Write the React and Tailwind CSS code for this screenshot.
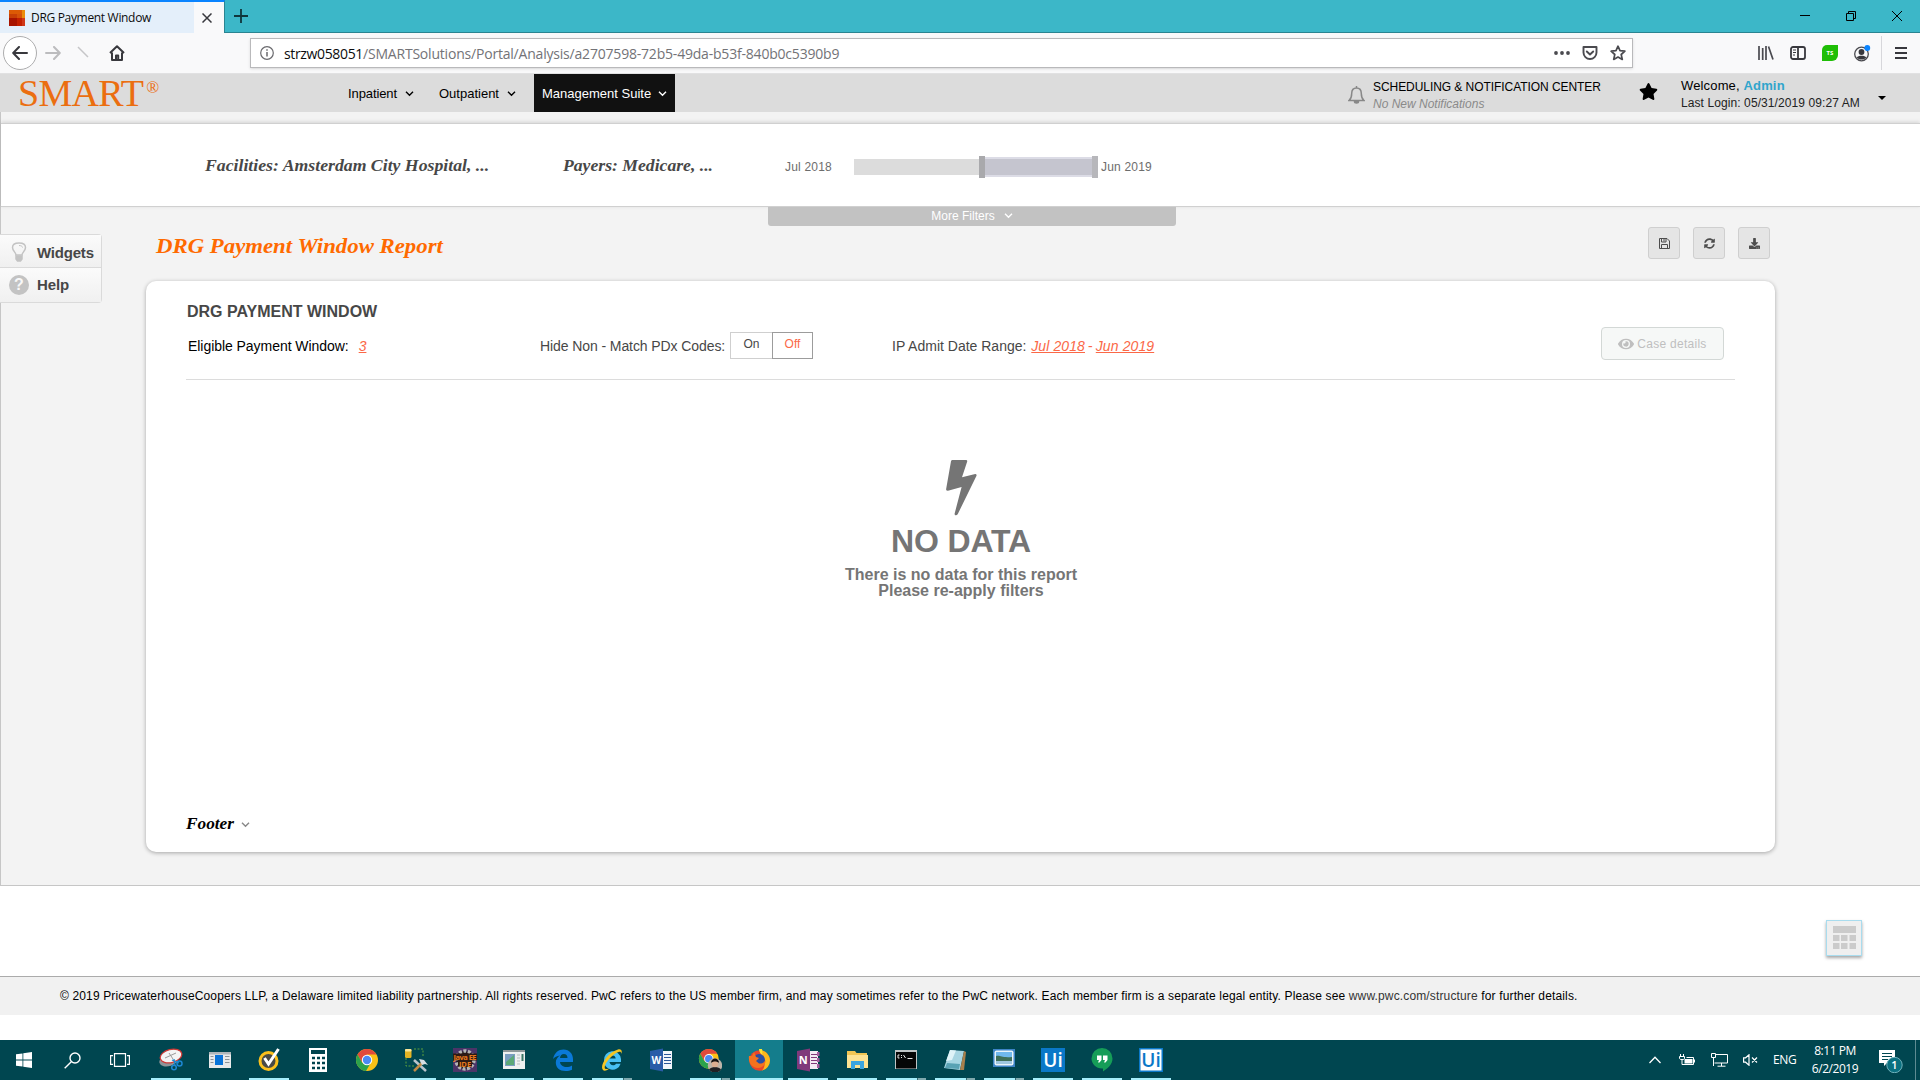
import React from "react";
import { FaSyncAlt, FaDownload, FaEye, FaStar } from "react-icons/fa";

const Chevron = ({ className = "", w = 9 }) => (
  <svg width={w} height={w} viewBox="0 0 9 9" fill="none" stroke="currentColor" strokeWidth="1.4" className={className}>
    <path d="M1 2.8 4.5 6.2 8 2.8" />
  </svg>
);

/* ---------- Browser chrome ---------- */

function TabBar() {
  return (
    <div className="flex h-[33px] bg-[#3cb7c8] border-b border-[#2a8491]">
      <div className="flex h-[33px] w-[225px] shrink-0 border-r border-r-[#2a8491] border-t-2 border-t-[#0a84ff] bg-[#f9f9fa]">
        <div className="flex w-[194px] items-center bg-[#e4effa] pl-[9px]">
          <svg width="16" height="16" viewBox="0 0 16 16" className="mt-px shrink-0" shapeRendering="crispEdges">
            <rect width="16" height="16" fill="#c73c0a" />
            <rect width="13" height="5" fill="#dc5a05" />
            <rect x="13" width="3" height="8" fill="#eb8c0a" />
            <rect y="4" width="8" height="4" fill="#c84005" />
            <rect x="8" y="4" width="5" height="4" fill="#d65208" />
            <rect y="8" width="8" height="8" fill="#a81400" />
            <rect x="8" y="8" width="5" height="8" fill="#c32000" />
            <rect x="13" y="8" width="3" height="8" fill="#d03818" />
          </svg>
          <span className="ml-1.5 whitespace-nowrap text-[12px] tracking-[-0.32px] text-[#0c0c0d]">DRG Payment Window</span>
        </div>
        <div className="flex w-[30px] items-center pl-[8px]">
          <svg width="10" height="10" viewBox="0 0 10 10" stroke="#38383d" strokeWidth="1.5"><path d="M.5.5l9 9M9.500.5l-9 9" /></svg>
        </div>
      </div>
      <div className="flex w-8 items-center justify-center">
        <svg width="14" height="14" viewBox="0 0 14 14" stroke="#10363b" strokeWidth="1.8"><path d="M7 0v14M0 7h14" /></svg>
      </div>
      <div className="ml-auto flex">
        <div className="flex w-[46px] items-center justify-center"><svg width="10" height="10" viewBox="0 0 10 10" stroke="#000"><path d="M0 4.5h10" /></svg></div>
        <div className="flex w-[46px] items-center justify-center"><svg width="10" height="10" viewBox="0 0 10 10" fill="none" stroke="#000"><path d="M.5 2.500h7v7h-7zM2.500 2.500v-2h7v7h-2" /></svg></div>
        <div className="flex w-[46px] items-center justify-center"><svg width="10" height="10" viewBox="0 0 10 10" stroke="#000"><path d="M0 0l10 10M10 0L0 10" /></svg></div>
      </div>
    </div>
  );
}

function NavBar() {
  return (
    <div className="flex h-[41px] items-center border-b border-[#e1e1e2] bg-[#f9f9fa] pl-[3px]">
      <div className="flex h-[34px] w-[34px] items-center justify-center rounded-full border border-[#adadae] bg-white">
        <svg width="16" height="14" viewBox="0 0 16 14" fill="none" stroke="#38383d" strokeWidth="2" strokeLinecap="round" strokeLinejoin="round"><path d="M15 7H1.500M7 1L1.200 7 7 13" /></svg>
      </div>
      <svg width="16" height="14" viewBox="0 0 16 14" fill="none" stroke="#bcbcbe" strokeWidth="2" strokeLinecap="round" strokeLinejoin="round" className="ml-2"><path d="M1 7h13.500M9 1l5.800 6L9 13" /></svg>
      <svg width="12" height="12" viewBox="0 0 12 12" stroke="#c6c6c8" strokeWidth="1.500" className="mb-[3px] ml-[16px]"><path d="M1 1l10 10" /></svg>
      <svg width="16" height="16" viewBox="0 0 16 16" fill="none" stroke="#38383d" strokeWidth="2" strokeLinejoin="round" className="ml-5"><path d="M1 8l7-6.800L15 8M3 7.500V15h10V7.500M7 15v-4.500h2.200V15" /></svg>
      <div className="ml-[125px] flex h-[30px] w-[1383px] items-center border border-[#b9b9bb] bg-white pl-[9px] pr-[6px] shadow-sm">
        <svg width="14" height="14" viewBox="0 0 14 14" fill="none" stroke="#6a6a6e" strokeWidth="1.200"><circle cx="7" cy="7" r="6.300" /><path d="M7 6v4.500M7 3.300v1.500" strokeWidth="1.500" /></svg>
        <div className="ml-[10px] mt-px whitespace-nowrap text-[14px] tracking-[-0.2px] text-[#737377]"><span className="tracking-[-0.35px] text-[#0c0c0d]">strzw058051</span>/SMARTSolutions/Portal/Analysis/a2707598-72b5-49da-b53f-840b0c5390b9</div>
        <svg width="16" height="4" viewBox="0 0 16 4" fill="#4a4a4f" className="ml-auto"><circle cx="2" cy="2" r="1.900" /><circle cx="8" cy="2" r="1.900" /><circle cx="14" cy="2" r="1.900" /></svg>
        <svg width="16" height="15" viewBox="0 0 16 15" fill="none" stroke="#4a4a4f" strokeWidth="1.900" strokeLinecap="round" strokeLinejoin="round" className="ml-3"><path d="M1.500 1h13v5.500a6.500 6.500 0 0 1-13 0zM4.800 5.500L8 8.500l3.200-3" /></svg>
        <svg width="16" height="16" viewBox="0 0 16 16" fill="none" stroke="#4a4a4f" strokeWidth="1.700" strokeLinejoin="round" className="ml-3"><path d="M8 1.200l2 4.500 4.900.5-3.700 3.300 1.100 4.900L8 12l-4.300 2.400 1.100-4.900L1.100 6.200 6 5.700z" /></svg>
      </div>
      <svg width="16" height="16" viewBox="0 0 16 16" fill="none" stroke="#4a4a4f" strokeWidth="1.700" className="ml-[125px]"><path d="M1 1v14M4.700 3v12M8 1v14M10.500 1.500l4.500 13" /></svg>
      <svg width="16" height="14" viewBox="0 0 16 14" fill="none" stroke="#38383d" strokeWidth="1.800" className="ml-4"><rect x="1" y="1" width="14" height="12" rx="2" /><path d="M8 1v12" /><path d="M3 4h3M3 6.500h3M3 9h2" strokeWidth="1" /></svg>
      <div className="ml-4 flex h-4 w-4 items-center justify-center rounded-tl-[5px] rounded-br-[6px] bg-[#1fbe06] text-[6px] font-bold text-white">TS</div>
      <svg width="17" height="17" viewBox="0 0 17 17" className="ml-4"><circle cx="7.500" cy="9" r="6.800" fill="none" stroke="#4a4a4f" strokeWidth="1.300" /><circle cx="7.500" cy="7" r="2.900" fill="#38383d" /><path d="M2.800 12.500c1-2.500 8.400-2.500 9.400 0-2.400 2.800-7 2.800-9.400 0z" fill="#38383d" /><circle cx="13.300" cy="3" r="2.900" fill="#0a84ff" /></svg>
      <div className="ml-[10px] h-[34px] w-px bg-[#d7d7db]" />
      <svg width="12" height="12" viewBox="0 0 12 12" stroke="#38383d" strokeWidth="2" className="ml-[13px]"><path d="M0 1h12M0 6h12M0 11h12" /></svg>
    </div>
  );
}

/* ---------- Application header ---------- */

function AppHeader() {
  return (
    <header className="flex h-[38px] bg-[#dcdcdc] text-[13px] text-black">
      <div className="flex w-[338px] items-start pl-[18px] font-['Liberation_Serif',serif] text-[#eb6e10]">
        <span className="text-[38px] leading-[39px] tracking-[-0.700px]">SMART</span>
        <span className="ml-[3px] mt-[5px] text-[17px] leading-[17px]">®</span>
      </div>
      <nav className="flex">
        <a className="flex w-[91px] items-center pl-[10px] pt-px tracking-[-0.1px]">Inpatient<Chevron className="ml-2" /></a>
        <a className="flex w-[105px] items-center pl-[10px] pt-px">Outpatient<Chevron className="ml-2" /></a>
        <a className="flex w-[141px] items-center bg-[#111] pl-2 pt-px text-white"><span className="whitespace-nowrap">Management Suite</span><Chevron className="ml-[7px] shrink-0" /></a>
      </nav>
      <div className="ml-[673px] flex">
        <svg width="17" height="19" viewBox="0 0 17 19" fill="none" stroke="#888" strokeWidth="1.500" className="mt-[11px]"><path d="M1 15.500c2.500-2 2.700-4 2.700-7C3.700 5 5.500 3 8.500 3s4.800 2 4.800 5.500c0 3 .2 5 2.700 7zM8.500 1v2" /><path d="M6.500 16.500a2 1.500 0 0 0 4 0z" fill="#888" /></svg>
        <div className="ml-[8px] w-[266px] pt-[6px] text-[12px]">
          <div className="h-[17px] whitespace-nowrap leading-[14px] tracking-[-0.06px]">SCHEDULING &amp; NOTIFICATION CENTER</div>
          <div className="italic leading-[14px] text-[#8a8a8a]">No New Notifications</div>
        </div>
        <FaStar size={19} className="mt-[8px]" />
        <div className="ml-[23px] w-[187px] whitespace-nowrap pt-[4px]">
          <div className="h-[18px] leading-[15px] tracking-[0.15px]">Welcome, <b className="text-[#30a5cc]">Admin</b></div>
          <div className="text-[12px] leading-[15px] tracking-[0.09px] text-[#222]">Last Login: 05/31/2019 09:27 AM</div>
        </div>
        <div className="ml-[10px] mt-[22px] h-0 w-0 border-x-4 border-t-4 border-x-transparent border-t-black" />
      </div>
    </header>
  );
}

function FilterBar() {
  return (
    <div className="flex h-[84px] items-center border-y border-[#d0d0d0] bg-white pl-[204px] pt-[3px] text-[#474747] shadow-[0_-1px_4px_rgba(0,0,0,0.13)]">
      <div className="w-[358px] whitespace-nowrap font-['Liberation_Serif',serif] text-[16.500px] font-bold italic"><span className="inline-block origin-left scale-x-[1.075]">Facilities: Amsterdam City Hospital, ...</span></div>
      <div className="w-[222px] whitespace-nowrap font-['Liberation_Serif',serif] text-[16.500px] font-bold italic"><span className="inline-block origin-left scale-x-[1.070]">Payers: Medicare, ...</span></div>
      <div className="w-[69px] text-[12px] tracking-[0.2px] text-[#6d6d6d]">Jul 2018</div>
      <div className="flex h-[22px] w-[244px] items-center">
        <div className="h-4 w-[125px] bg-[#dcdcdc]" />
        <div className="flex h-[22px] w-[119px] items-center">
          <div className="h-[22px] w-[6px] bg-[#a9a9ac]" />
          <div className="h-5 w-[107px] border-y-2 border-[#dcdce6] bg-[#c5c5cf]" />
          <div className="h-[22px] w-[6px] bg-[#b7b7bb]" />
        </div>
      </div>
      <div className="ml-[3px] text-[12px] tracking-[0.2px] text-[#6d6d6d]">Jun 2019</div>
    </div>
  );
}

/* ---------- Report page ---------- */

const toolBtn = "flex h-8 w-8 items-center justify-center rounded-[3px] border border-[#cfcfcf] bg-[#e5e5e5] text-[#4d4d4d]";

function SideTabs() {
  return (
    <div className="-ml-px mt-[27px] h-[69px] w-[102px] shrink-0 rounded-r-[4px] border border-l-0 border-[#dadada] text-[15px] font-bold text-[#474747]">
      <div className="flex h-[33px] items-center border-b border-[#dadada] bg-linear-to-b from-[#fbfbfb] to-[#f0f0f0] pl-[11px]">
        <svg width="16" height="20" viewBox="0 0 16 20" fill="none" stroke="#c3c3c3" strokeWidth="1.500" className="mt-0.5"><path d="M5 13c0-2.500-3.500-4-3.500-7.500C1.500 2.500 4.500 1 8 1s6.500 1.500 6.500 4.500C14.500 9 11 10.500 11 13z" /><path d="M8 3.500c2 0 3.500.8 3.500 2" strokeWidth="1" /><path d="M5 14h6v3l-1.500 2h-3L5 17z" fill="#c3c3c3" /></svg>
        <span className="ml-[10px] mt-[4px] tracking-[-0.200px]">Widgets</span>
      </div>
      <div className="flex h-[34px] items-center bg-linear-to-b from-[#fbfbfb] to-[#f0f0f0] pl-[9px]">
        <span className="flex h-5 w-5 items-center justify-center rounded-full bg-[#c3c3c3] text-[16px] text-[#f8f8f8]">?</span>
        <span className="ml-[8px] mt-px tracking-[-0.1px]">Help</span>
      </div>
    </div>
  );
}

function ReportCard() {
  return (
    <section className="flex h-[571px] w-[1629px] flex-col rounded-[10px] bg-white px-[40px] pt-[21px] text-[#474747] shadow-[0_1px_4px_rgba(0,0,0,0.32)]">
      <h2 className="pl-px text-[16px] font-bold leading-[20px]">DRG PAYMENT WINDOW</h2>
      <div className="mt-[4px] flex h-[40px] items-center whitespace-nowrap text-[14px]">
        <div className="w-[354px] pl-[2px] tracking-[-0.05px] text-black">Eligible Payment Window:<span className="ml-[10px] italic text-[#fb6847] underline">3</span></div>
        <div className="w-[190px] tracking-[-0.09px]">Hide Non - Match PDx Codes:</div>
        <div className="-mt-[2px] flex h-[27px] w-[162px] text-[12px]">
          <div className="flex w-[42px] items-center justify-center border border-r-0 border-[#cfcfcf] pb-0.5">On</div>
          <div className="flex w-[41px] items-center justify-center border border-[#9c9c9c] pb-0.5 text-[#fb6847]">Off</div>
        </div>
        <div>IP Admit Date Range: <span className="ml-px tracking-[0.1px] text-[#fb6847]"><i className="underline">Jul 2018</i><span className="mx-[3px]">-</span><i className="underline">Jun 2019</i></span></div>
        <div className="-mt-[5px] ml-auto mr-[11px] flex h-[33px] w-[123px] items-center justify-center rounded-[4px] border border-[#d3d8d6] bg-[#f6f8f7] text-[12px] tracking-[0.27px] text-[#bfbfbf]"><FaEye size={16} className="mr-[3px]" />Case details</div>
      </div>
      <div className="mt-[13px] h-px bg-[#dcdcdc]" />
      <div className="mt-[79px] flex flex-col items-center pl-px font-bold text-[#757575]">
        <svg width="31" height="57" viewBox="0 0 31 57" fill="currentColor"><path d="M6.500 1h13.500q1.500 0 1.200 1.500L16 18.200l13.200-3.200q1.700 0 1.300 1.800L11.800 55q-.8 1.600-2.500 1.300-1-.4-.6-2L15.600 28 2 31.800q-2 0-1.900-1.500L5 2.200Q5.300 1 6.500 1z" /></svg>
        <div className="mt-[7px] text-[32px] leading-[36px] tracking-[-0.15px]">NO DATA</div>
        <div className="mt-[8px] text-center text-[16px] leading-[16px]">There is no data for this report<br />Please re-apply filters</div>
      </div>
      <div className="mb-[18px] mt-auto flex items-center font-['Liberation_Serif',serif] text-[16px] font-bold italic leading-5 text-black"><span className="inline-block w-[48px] origin-left scale-x-[1.08]">Footer</span><Chevron className="ml-[7px] text-[#888]" /></div>
    </section>
  );
}

function ReportArea() {
  return (
    <main className="flex h-[774px] flex-col border-b border-l border-[#c6c6c6] bg-[#f3f3f3]">
      <div className="h-[11px] shrink-0" />
      <FilterBar />
      <div className="flex">
        <SideTabs />
        <div className="ml-[44px] w-[1629px]">
          <div className="flex h-[74px]">
            <h1 className="w-[622px] whitespace-nowrap pl-[10px] pt-[25px] font-['Liberation_Serif',serif] text-[20.500px] font-bold italic leading-[28px] text-[#ff6a00]"><span className="inline-block origin-left scale-x-[1.112]">DRG Payment Window Report</span></h1>
            <div className="flex h-[19px] w-[408px] items-center justify-center rounded-b-[3px] bg-[#c2c2c2] pb-[2px] text-[12px] text-white">More Filters<Chevron className="ml-[9px]" /></div>
            <div className="ml-auto mr-[5px] mt-5 flex gap-[13px]">
              <div className={toolBtn}>
                <svg width="11" height="11" viewBox="0 0 11 11" fill="none" stroke="currentColor"><path d="M.5.5h7.500l2.500 2.500v7.500H.5zM2.500 10.500v-4h6v4" /><path d="M2.500.5h4.500v3.500H2.500zM5 1v2.500" /></svg>
              </div>
              <div className={toolBtn}><FaSyncAlt size={11} /></div>
              <div className={toolBtn}><FaDownload size={11} /></div>
            </div>
          </div>
          <ReportCard />
        </div>
      </div>
    </main>
  );
}

function PageFooter() {
  return (
    <>
      <div className="flex h-[90px] justify-end bg-white pr-[58px] pt-[34px]">
        <div className="flex h-9 w-9 items-center justify-center border border-[#a9dcee] bg-[#efefef] shadow-[0_2px_3px_rgba(0,0,0,0.35)]">
          <svg width="23" height="24" viewBox="0 0 23 24" fill="#cbcbcb"><path d="M0 0h23v7H0zM0 9h6.500v6H0zM8 9h6.500v6H8zM16.500 9H23v6h-6.500zM0 17h6.500v6H0zM8 17h6.500v6H8zM16.500 17H23v6h-6.500z" /></svg>
        </div>
      </div>
      <footer className="flex h-[39px] items-center whitespace-nowrap border-t border-[#ababab] bg-[#f1f1f1] pl-[60px] text-[12px] tracking-[0.143px] text-black">
        <span>© 2019 PricewaterhouseCoopers LLP, a Delaware limited liability partnership. All rights reserved. PwC refers to the US member firm, and may sometimes refer to the PwC network. Each member firm is a separate legal entity. Please see <span className="text-[#333]">www.pwc.com/structure</span> for further details.</span>
      </footer>
      <div className="h-[25px] bg-white" />
    </>
  );
}

/* ---------- Taskbar ---------- */

const ChromeMark = () => (
  <g>
    <circle cx="12" cy="12" r="11" fill="#fbc116" />
    <path d="M2.500 6.500A11 11 0 0 1 21.500 6.500H12L7.200 14.800z" fill="#e04a3c" />
    <path d="M2.500 6.500A11 11 0 0 0 11 23l5-8.500-8.800.3z" fill="#2ba24c" />
    <circle cx="12" cy="12" r="5.200" fill="#fff" />
    <circle cx="12" cy="12" r="4.200" fill="#4a8af4" />
  </g>
);

const icons = {
  snip: <g><ellipse cx="10" cy="12" rx="10" ry="6" fill="#8d9498" transform="rotate(-18 10 12)" /><ellipse cx="12" cy="8" rx="11" ry="6.500" fill="#f4f4f4" stroke="#cf3a36" strokeWidth="1.200" transform="rotate(-14 12 8)" /><path d="M6 10l11-5M10 5l4 6" stroke="#999" /><path d="M13 12l7 3M15 11l1 7" stroke="#1c86d1" strokeWidth="1.300" /><circle cx="15" cy="19.500" r="2.300" fill="none" stroke="#1c86d1" strokeWidth="1.500" /><circle cx="20.500" cy="15.500" r="2.500" fill="none" stroke="#1c86d1" strokeWidth="1.500" /></g>,
  panel: <g><path d="M1 4h22v16H1z" fill="#e9eaea" /><path d="M1 4h22v2.500H1z" fill="#aeb6ba" /><path d="M7 7h8v10H7z" fill="#0a74d8" /><path d="M2.500 8.500h3M2.500 11.500h3M2.500 14.500h3M17 8.500h4.500M17 11.500h4.500M17 14.500h4.500" stroke="#8b9397" /></g>,
  norton: <g><circle cx="11.500" cy="13" r="8.500" fill="#4a4a45" stroke="#fbc01c" strokeWidth="3" /><path d="M7.500 10l4 6L21.500 1" fill="none" stroke="#fff" strokeWidth="3" /></g>,
  calc: <g><path d="M3 0h18v24H3z" fill="#fff" /><path d="M5 2h14v4H5z" fill="#00434e" /><path d="M6 10h3M11 10h3M16 10h3M6 15h3M11 15h3M16 15h3M6 20h3M11 20h3M16 20h3" stroke="#00434e" strokeWidth="2.500" /></g>,
  chrome: <ChromeMark />,
  database: <g><path d="M10 1h9v8M10 18H2v-8" fill="none" stroke="#5aa03c" strokeDasharray="2 1.500" /><rect x="1" y="1" width="6.500" height="9" rx="1.500" fill="#e4b424" /><rect x="1" y="1" width="6.500" height="2.500" rx="1" fill="#fbe79a" /><path d="M10 12l12 11" stroke="#b9c4cc" strokeWidth="2.500" /><path d="M10 23l9-9" stroke="#c08a44" strokeWidth="2.500" /><path d="M15 11l5 1 4 5-3-1-3 1z" fill="#d5dde2" /></g>,
  java: <g><path d="M0 0h24v24H0z" fill="#4a3468" /><circle cx="12" cy="12" r="9" fill="#1f1718" stroke="#b4b4b4" strokeWidth="3.500" strokeDasharray="3 1.500" /><path d="M0 5.500h24v7H5v6h14v-6H0z" fill="#2d1a14" /><text x="12" y="11.500" textAnchor="middle" fontSize="7.500" fontWeight="bold" fill="#e87a1c" textLength="23">Java EE</text><text x="12" y="18.500" textAnchor="middle" fontSize="7.500" fontWeight="bold" fill="#e87a1c">IDE</text></g>,
  sheet: <g><path d="M1 2h22v19H1z" fill="#eef0f0" /><path d="M1 2h22v2H1z" fill="#8e9799" /><path d="M3 6h10v12H3z" fill="#7a9dc0" /><path d="M4 14l8-7v10H4z" fill="#5ca877" /><path d="M15 7h3M15 10h3M15 13h3M15 16h3" stroke="#b5bcbe" /><path d="M20.500 6v7" stroke="#3d7766" strokeWidth="2" /></g>,
  edge: <path d="M2 11C3.500 4.500 7.500 1.500 12.500 1.500c6 0 9.500 4.500 9.500 9.500v3H9c.3 3.500 3.500 5 6.500 5 2 0 3.900-.5 5.500-1.500v4.200c-1.700.9-4 1.300-6.500 1.300-6 0-9.700-3.500-9.700-8.500 0-3 1.700-5.500 4.200-7C5.800 8 3.500 9 2 11zm7-1h7.500c0-2.500-1.400-4-3.600-4S9.300 7.500 9 10z" fill="#0a79d8" />,
  ie: <g><path d="M4 12.500a8.500 8.500 0 0 1 17-1.500v3H9.500c.3 2 1.500 3.200 3.500 3.200 1.300 0 2.300-.5 3-1.500h4.600A8.500 8.500 0 0 1 4 12.500zm5.500-2h6.200c-.2-1.800-1.400-3-3-3s-2.900 1.200-3.200 3z" fill="#48c1f3" /><path d="M3 22C-1 18 8 4 18 1.500c3.500-.8 4.500 1.500 3.200 4.500.2-2-.9-2.800-2.700-2C11.500 6.500 3 17 5 20.500c1 1.200 3.400.4 5-.8-2.500 2.500-5.500 3.800-7 2.300z" fill="#f4c522" /></g>,
  word: <g><path d="M12 3h11v18H12z" fill="#f2f5fa" /><path d="M15 6.500h7M15 9.500h7M15 12.500h7M15 15.500h7" stroke="#2a5698" /><path d="M1 3l13-2.500v23L1 21z" fill="#2a5ca8" /><text x="7.300" y="15.500" textAnchor="middle" fontSize="10" fontWeight="bold" fill="#fff">W</text></g>,
  profile: <g><g transform="scale(.9)"><ChromeMark /></g><circle cx="17" cy="17.500" r="7.200" fill="#bdb4a9" /><path d="M11 21.500c2-3.500 10-3.500 12 0a7.200 7.200 0 0 1-12 0z" fill="#202024" /><circle cx="17" cy="16" r="3.300" fill="#dcae91" /><path d="M13 15c0-6 8-6 8 0-2-2-6-2-8 0z" fill="#181414" /></g>,
  firefox: <g><circle cx="12.500" cy="12.500" r="10.300" fill="#e8452c" /><path d="M14 2c5 1 9 5.500 9 10.500a10.300 10.300 0 0 1-8 10C20 18 17 9 14 2z" fill="#fcb81d" /><path d="M12 1c0 4 3 5 4 8l-1-8z" fill="#fde331" /><circle cx="12" cy="12" r="6" fill="#2a4fa3" /><path d="M2 8C1 15 5 20 11 20c5 0 8-4 7.500-8-1.500 3-4 4-6.500 3.500L9 13l3-3-3-1-2-5-2 4z" fill="#f4721e" /></g>,
  onenote: <g><path d="M12 3h10v18H12z" fill="#f3e9f4" /><path d="M15 6.500h6M15 9.500h6M15 12.500h6M15 15.500h6" stroke="#80397b" /><path d="M21 4h2.500v4H21zM21 10h2.500v4H21zM21 16h2.500v4H21z" fill="#a35b9f" /><path d="M1 3l13-2.500v23L1 21z" fill="#80397b" /><text x="7.300" y="16" textAnchor="middle" fontSize="11" fontWeight="bold" fill="#fff">N</text></g>,
  folder: <g><path d="M2 3h8l1.500 2H22v15H2z" fill="#f1c654" /><path d="M2 7h21v13H2z" fill="#fde393" /><path d="M6 21v-8h13v8h-4v-4h-5v4z" fill="#3aa5e0" /></g>,
  cmd: <g><path d="M1 2h22v19H1z" fill="#bfc4c5" /><path d="M2 4h20v16.500H2z" fill="#060606" /><path d="M5.500 7H4v3h1.500M7.500 7v1M7.500 10V9M9.500 7l2 3M13.500 10.500h5" stroke="#e8e8e8" fill="none" /></g>,
  notepad: <g><path d="M7 2l14 1-4 19-16-2z" fill="#a7d5e2" /><path d="M7 2l6 .5L9 12l-6 1z" fill="#dff3f8" /><path d="M21 3l2 1-2 18-4 0z" fill="#a8804c" /><path d="M4 15l13 1-1 5-14-1z" fill="#59a2b4" /></g>,
  photo: <g><path d="M1 1h22v18H1z" fill="#3d84c6" /><rect x="2.500" y="2.500" width="19" height="15" rx="2" fill="#eaf4fa" /><path d="M4 4h16v6H4z" fill="#70b8ec" /><path d="M4 8c5-1 5 2 16 1v4H4z" fill="#3f6f58" /><path d="M4 13h16v3H4z" fill="#9fc7df" /></g>,
  ui: <g><path d="M0 0h24v24H0z" fill="#0a78c8" /><text x="12" y="19" textAnchor="middle" fontSize="19" fontWeight="600" fill="#fff">Ui</text></g>,
  hangouts: <g><path d="M12 0a10.500 10.500 0 0 1 10.500 10.500c0 6-5 10-9.500 13v-3C6.500 21 1.500 16 1.500 10.500A10.500 10.500 0 0 1 12 0z" fill="#169d58" /><path d="M7 7.500h4.500V12l-2 2.500H8L9 12H7zM13 7.500h4.500V12l-2 2.500H14l1-2.500h-2z" fill="#fff" /></g>,
  uiAlt: <g><path d="M0 0h24v24H0z" fill="#0a78c8" /><path d="M1.500 1.500h21v21h-21z" fill="#fff" /><text x="12" y="19" textAnchor="middle" fontSize="19" fontWeight="600" fill="#0a78c8">Ui</text></g>,
};

const tasks = [
  ["snip", 1], ["panel", 0], ["norton", 1], ["calc", 0], ["chrome", 0], ["database", 1], ["java", 1], ["sheet", 1],
  ["edge", 1], ["ie", 2], ["word", 0], ["profile", 2], ["firefox", 3], ["onenote", 1], ["folder", 1], ["cmd", 2],
  ["notepad", 2], ["photo", 2], ["ui", 1], ["hangouts", 1], ["uiAlt", 1],
];

function TaskItem({ name, state }) {
  const active = state === 3;
  return (
    <div className="flex h-10 w-[49px] flex-col items-center">
      <div className={active ? "flex h-[38px] w-12 items-center justify-center bg-[#147d8c]" : "flex h-[38px] w-12 items-center justify-center"}>
        <svg width="24" height="24" viewBox="0 0 24 24" className="mt-[2px]">{icons[name]}</svg>
      </div>
      {state > 0 && (
        <div className={active ? "flex h-[2px] w-12 bg-[#a5eefb]" : "flex h-[2px] w-10 bg-[#a5eefb]"}>
          {state === 2 && <div className="ml-auto h-[2px] w-[9px] border-l border-[#33686f] bg-[#7fa9ae]" />}
        </div>
      )}
    </div>
  );
}

function Taskbar() {
  return (
    <div className="flex h-10 bg-[#004650] text-white">
      <div className="flex w-12 items-center justify-center"><svg width="16" height="16" viewBox="0 0 16 16" fill="#fff"><path d="M0 2.300L6.500 1.400V7.600H0zM7.300 1.200L16 0v7.600H7.300zM0 8.400h6.500v6.200L0 13.700zM7.300 8.400H16V16l-8.700-1.200z" /></svg></div>
      <div className="flex w-12 items-center justify-center"><svg width="17" height="17" viewBox="0 0 17 17" fill="none" stroke="#fff" strokeWidth="1.400"><circle cx="11" cy="6" r="5" /><path d="M7.300 9.700L.7 16.300" /></svg></div>
      <div className="mr-[2px] flex w-12 items-center justify-center"><svg width="20" height="14" viewBox="0 0 20 14" fill="none" stroke="#fff" strokeWidth="1.200"><path d="M4.500.6h11v12.800h-11zM3 2.600H.6v8.800H3M17 2.600h2.400v8.800H17" /></svg></div>
      {tasks.map(([name, state]) => <TaskItem key={name} name={name} state={state} />)}
      <div className="ml-auto flex items-center text-[12px]">
        <svg width="12" height="8" viewBox="0 0 12 8" fill="none" stroke="#fff" strokeWidth="1.300"><path d="M.5 7L6 1.300 11.500 7" /></svg>
        <svg width="16" height="12" viewBox="0 0 16 12" fill="none" stroke="#fff" className="ml-[18px]"><path d="M1.500 0v2.500M4.500 0v2.500M.5 2.500h5v2c0 1.500-5 1.500-5 0zM3 5.500v5h11.500v-7H7.500M15.500 5.500v3" /><path d="M5.500 5h8v4.500h-8z" fill="#fff" stroke="none" /></svg>
        <svg width="17" height="14" viewBox="0 0 17 14" fill="none" stroke="#fff" className="ml-4"><path d="M5 1.500h11.500v8.500H3.500M.5.500h4v4h-4zM2.500 4.500v8.500M10.500 10v3M6.500 13.200h8" /></svg>
        <svg width="15" height="12" viewBox="0 0 15 12" fill="none" stroke="#fff" strokeWidth="1.200" className="ml-[15px]"><path d="M.6 3.800h2L6 .8v10.400l-3.400-3H.6zM9 3.500l5 5M14 3.500l-5 5" /></svg>
        <span className="ml-[15px] w-[38px] tracking-[-0.4px]">ENG</span>
        <div className="w-[48px] text-center leading-[18px] tracking-[-0.45px]"><div>8:11 PM</div><div>6/2/2019</div></div>
        <svg width="26" height="26" viewBox="0 0 26 26" className="ml-[19px]"><path d="M1 3h16v13H9l-3 3v-3H1z" fill="#fff" /><path d="M4 6.500h10M4 9.500h10M4 12.500h6" stroke="#004650" /><circle cx="16.500" cy="18" r="7.700" fill="#0a7080" stroke="#6fb0ba" /><text x="16.500" y="22" textAnchor="middle" fontSize="11" fontWeight="600" fill="#fff">1</text></svg>
        <div className="ml-[11px] h-10 w-px bg-[#5d8b92]" />
        <div className="w-1" />
      </div>
    </div>
  );
}

export default function App() {
  return (
    <div className="h-[1080px] w-[1920px] overflow-hidden bg-white font-['Liberation_Sans',Arial,sans-serif]">
      <div className="font-['Open_Sans','Noto_Sans',sans-serif]">
        <TabBar />
        <NavBar />
      </div>
      <AppHeader />
      <ReportArea />
      <PageFooter />
      <div className="font-['Open_Sans','Noto_Sans',sans-serif]">
        <Taskbar />
      </div>
    </div>
  );
}
